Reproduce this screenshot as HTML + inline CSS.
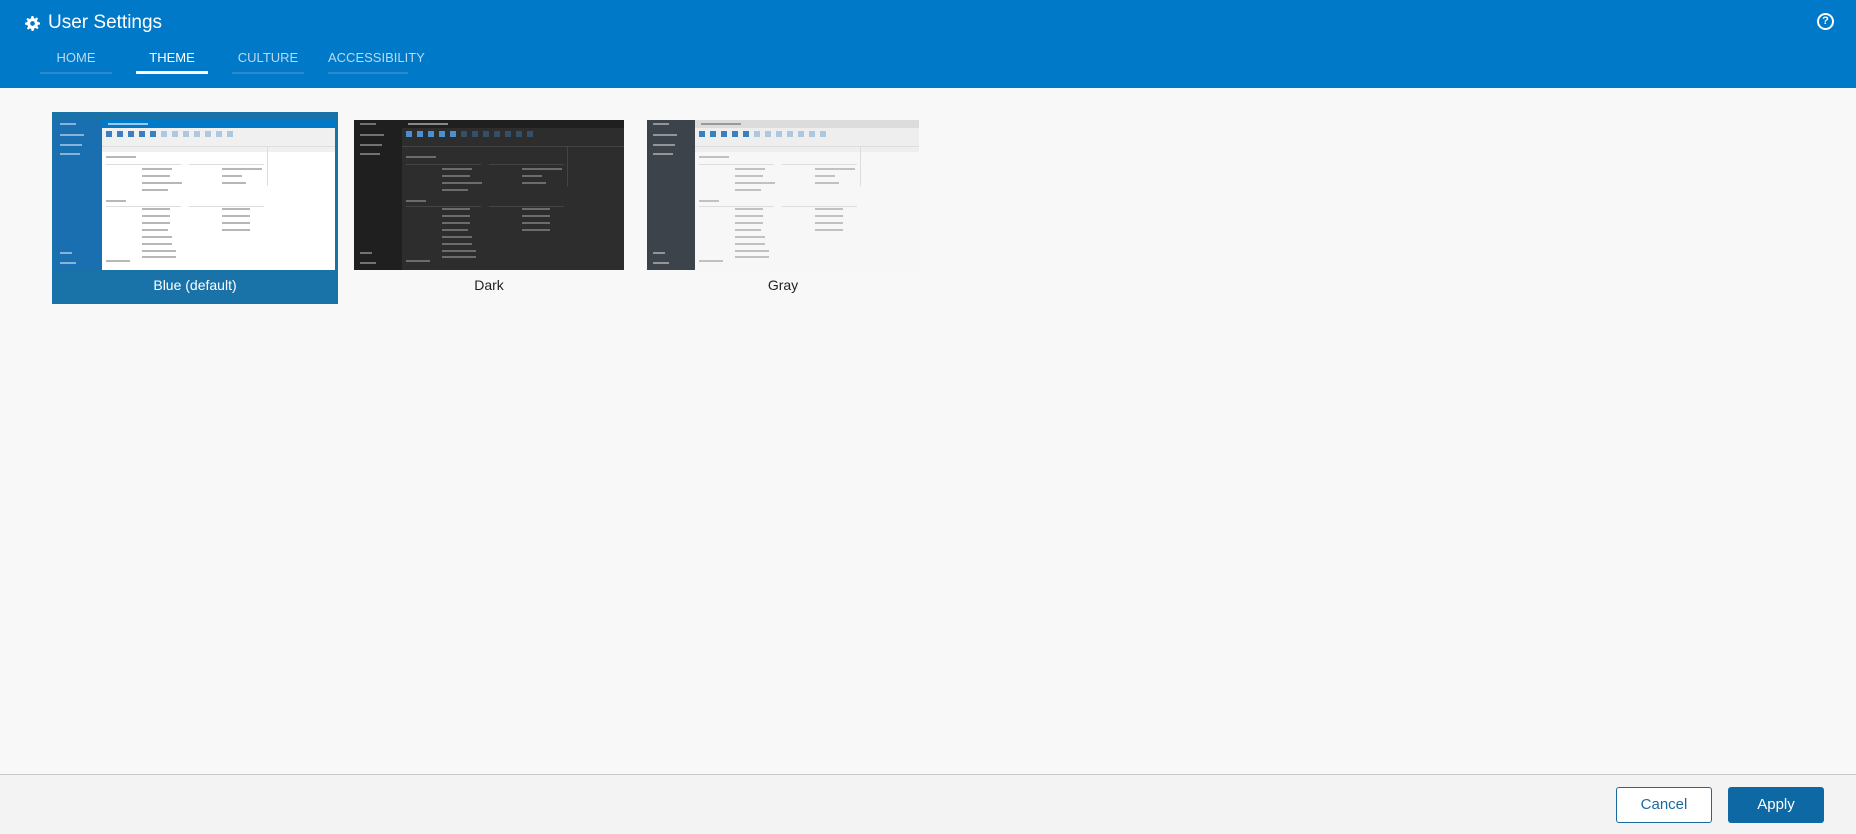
<!DOCTYPE html>
<html><head><meta charset="utf-8"><style>
*{box-sizing:border-box;margin:0;padding:0}
body{width:1856px;height:834px;overflow:hidden;background:#f8f8f8;font-family:"Liberation Sans",sans-serif;position:relative}
.hdr{position:absolute;left:0;top:0;width:1856px;height:88px;background:#0079c8;color:#fff}
.title{position:absolute;left:48px;top:12px;font-size:19px}
.gear{position:absolute;left:25px;top:16px}
.help{position:absolute;left:1817px;top:13px;width:17px;height:17px;border:2px solid #fff;border-radius:50%;font-size:11px;font-weight:bold;text-align:center;line-height:13px}
.tab{position:absolute;top:50px;width:72px;height:24px;text-align:center;font-size:13px;color:#bcd9ef;border-bottom:2px solid #2a8ad0}
.tab.on{color:#fff;border-bottom:3px solid #fff}
.card{position:absolute;top:112px;height:192px}
.card.sel{background:#1a73a8}
.lbl{position:absolute;left:0;right:0;top:165px;text-align:center;font-size:14px;color:#222}
.sel .lbl{color:#fff}
.th{position:absolute;top:8px;width:270px;height:150px;overflow:hidden;background:var(--c)}
.sb{position:absolute;left:0;top:0;width:48px;height:150px;background:var(--s)}
.sb i{position:absolute;left:6px;height:2px;background:var(--st);opacity:.6}
.tb{position:absolute;left:48px;top:0;right:0;height:8px;background:var(--t)}
.tb b{position:absolute;left:6px;top:3px;width:40px;height:2px;background:var(--st2)}
.tl{position:absolute;left:48px;top:8px;right:0;height:18px;background:var(--tl)}
.tl i{position:absolute;top:3px;width:6px;height:6px;background:var(--ic)}
.nm{position:absolute;left:48px;top:26px;right:0;height:6px;background:var(--tl);border-top:1px solid var(--ln)}
.ct i{position:absolute;height:2px;background:var(--tx);opacity:.7}
.ct u{position:absolute;height:1px;background:var(--ln)}
</style></head><body>
<div class="hdr">
<svg class="gear" width="15" height="15" viewBox="0 0 16 16"><path fill="#fff" d="M7 0h2l.4 2.2 1.4.6 1.8-1.3 1.4 1.4-1.3 1.8.6 1.4L16 7v2l-2.2.4-.6 1.4 1.3 1.8-1.4 1.4-1.8-1.3-1.4.6L9 16H7l-.4-2.2-1.4-.6-1.8 1.3-1.4-1.4 1.3-1.8-.6-1.4L0 9V7l2.2-.4.6-1.4-1.3-1.8 1.4-1.4 1.8 1.3 1.4-.6zM8 5.5a2.5 2.5 0 100 5 2.5 2.5 0 000-5z"/></svg>
<div class="title">User Settings</div>
<div class="help">?</div>
<div class="tab" style="left:40px">HOME</div>
<div class="tab on" style="left:136px">THEME</div>
<div class="tab" style="left:232px">CULTURE</div>
<div class="tab" style="left:328px;width:80px">ACCESSIBILITY</div>
</div>

<div class="card sel" style="left:52px;width:286px">
<div class="th" style="left:2px;width:281px;--c:#fff;--s:#1a6fb0;--st:#cfe3f3;--t:#0079c8;--st2:#9cc8ea;--tl:#f0f0f0;--ic:#3a7fc0;--ln:#ddd;--tx:#999">TH</div>
<div class="lbl">Blue (default)</div></div>
<div class="card" style="left:354px;width:270px">
<div class="th" style="left:0;--c:#2d2d2d;--s:#1f1f1f;--st:#aaa;--t:#1f1f1f;--st2:#888;--tl:#2d2d2d;--ic:#4a90d0;--ln:#444;--tx:#888">TH</div>
<div class="lbl">Dark</div></div>
<div class="card" style="left:647px;width:272px">
<div class="th" style="left:0;width:272px;--c:#f7f7f7;--s:#3c434a;--st:#ccc;--t:#dcdcdc;--st2:#999;--tl:#eeeeee;--ic:#3a7fc0;--ln:#ddd;--tx:#aaa">TH</div>
<div class="lbl">Gray</div></div>

<div style="position:absolute;left:0;top:774px;width:1856px;height:60px;background:#f3f3f3;border-top:1px solid #c8c8c8"></div>
<div style="position:absolute;left:1616px;top:787px;width:96px;height:36px;border:1px solid #1a6aa0;border-radius:3px;background:#fff;color:#1a6aa0;font-size:15px;text-align:center;line-height:34px">Cancel</div>
<div style="position:absolute;left:1728px;top:787px;width:96px;height:36px;border-radius:3px;background:#0e68a3;color:#fff;font-size:15px;text-align:center;line-height:36px">Apply</div>

<script>
var inner='<div class="sb"><i style="top:3px;width:16px"></i><i style="top:14px;width:24px"></i><i style="top:24px;width:22px"></i><i style="top:33px;width:20px"></i><i style="top:132px;width:12px"></i><i style="top:142px;width:16px"></i></div><div class="tb"><b></b></div><div class="tl">';
for(var k=0;k<12;k++)inner+='<i style="left:'+(4+k*11)+'px;opacity:'+(k<5?1:.35)+'"></i>';
inner+='</div><div class="nm"></div><div class="ct">';
var rows=[[36,-1,30],[48,70,30],[55,70,28],[62,70,40],[69,70,26],[80,-1,20],[88,70,28],[95,70,28],[102,70,28],[109,70,26],[116,70,30],[123,70,30],[130,70,34],[136,70,34],[140,-1,24]];
rows.forEach(function(r){var l=r[1]<0?52:48+r[1]-30;inner+='<i style="left:'+l+'px;top:'+r[0]+'px;width:'+r[2]+'px"></i>';});
[[48,160,40],[55,160,20],[62,160,24],[88,160,28],[95,160,28],[102,160,28],[109,160,28]].forEach(function(r){inner+='<i style="left:'+(48+r[1]-40)+'px;top:'+r[0]+'px;width:'+r[2]+'px"></i>';});
inner+='<u style="left:52px;top:44px;width:75px"></u><u style="left:135px;top:44px;width:75px"></u><u style="left:52px;top:86px;width:75px"></u><u style="left:135px;top:86px;width:75px"></u><u style="left:213px;top:26px;width:1px;height:40px"></u>';
inner+='</div>';
document.querySelectorAll('.th').forEach(function(e){e.innerHTML=inner;});
</script>
</body></html>
